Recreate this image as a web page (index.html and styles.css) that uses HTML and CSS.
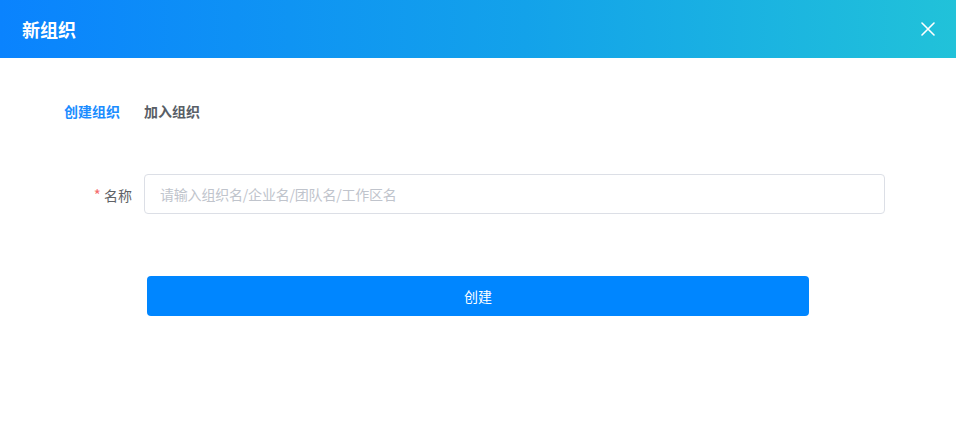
FILE: index.html
```html
<!DOCTYPE html>
<html lang="zh">
<head>
    <meta charset="UTF-8">
    <title>新组织</title>
    <link rel="stylesheet" href="styles.css">
</head>
<body>
    <div class="dialog">
        <header class="dialog-header">
            <h1>新组织</h1>
            <button class="close-btn" aria-label="关闭">
                <svg width="14" height="14" viewBox="0 0 14 14">
                    <path d="M1 1L13 13M13 1L1 13" stroke="#fff" stroke-width="1.6" stroke-linecap="round"/>
                </svg>
            </button>
        </header>
        <div class="dialog-body">
            <div class="tabs">
                <span class="tab active">创建组织</span>
                <span class="tab">加入组织</span>
            </div>
            <div class="form-row">
                <label class="form-label"><span class="required">*</span> 名称</label>
                <input class="form-input" type="text" placeholder="请输入组织名/企业名/团队名/工作区名">
            </div>
            <div class="form-actions">
                <button class="submit-btn">创建</button>
            </div>
        </div>
    </div>
</body>
</html>
```
FILE: styles.css
```css
body {
    margin: 0;
    padding: 0;
    font-family: "Noto Sans CJK SC", "Noto Sans", sans-serif;
    background-color: #fff;
}
.dialog {
    width: 956px;
    height: 422px;
    background-color: #fff;
}
.dialog-header {
    height: 58px;
    display: flex;
    align-items: center;
    justify-content: space-between;
    padding: 0 20px 0 22px;
    background: linear-gradient(90deg, #0a83fe 0%, #13a2ea 55%, #21c2d9 100%);
}
.dialog-header h1 {
    margin: 0;
    color: #fff;
    font-size: 18px;
    font-weight: bold;
    line-height: 1;
}
.close-btn {
    border: none;
    background: none;
    padding: 0;
    width: 16px;
    height: 16px;
    display: flex;
    align-items: center;
    justify-content: center;
    cursor: pointer;
}
.dialog-body {
    padding: 42px 0 0 64px;
}
.tabs {
    display: flex;
    gap: 24px;
    height: 22px;
    align-items: center;
}
.tab {
    font-size: 14px;
    color: #585e66;
    font-weight: 600;
}
.tab.active {
    color: #1a8cff;
}
.form-row {
    display: flex;
    align-items: center;
    margin-top: 52px;
}
.form-label {
    width: 68px;
    text-align: right;
    font-size: 14px;
    color: #606266;
    margin-right: 12px;
}
.required {
    color: #f56c6c;
    font-size: 15px;
}
.form-input {
    width: 741px;
    height: 40px;
    box-sizing: border-box;
    border: 1px solid #dcdfe6;
    border-radius: 4px;
    padding: 0 15px;
    font-family: inherit;
    font-size: 14px;
    letter-spacing: -0.2px;
    color: #333;
    outline: none;
}
.form-input::placeholder {
    color: #c0c4cc;
}
.form-actions {
    margin-top: 62px;
    padding-left: 83px;
}
.submit-btn {
    width: 662px;
    height: 40px;
    border: none;
    border-radius: 4px;
    background-color: #0086ff;
    color: #fff;
    font-family: inherit;
    font-size: 14px;
    cursor: pointer;
}
```
